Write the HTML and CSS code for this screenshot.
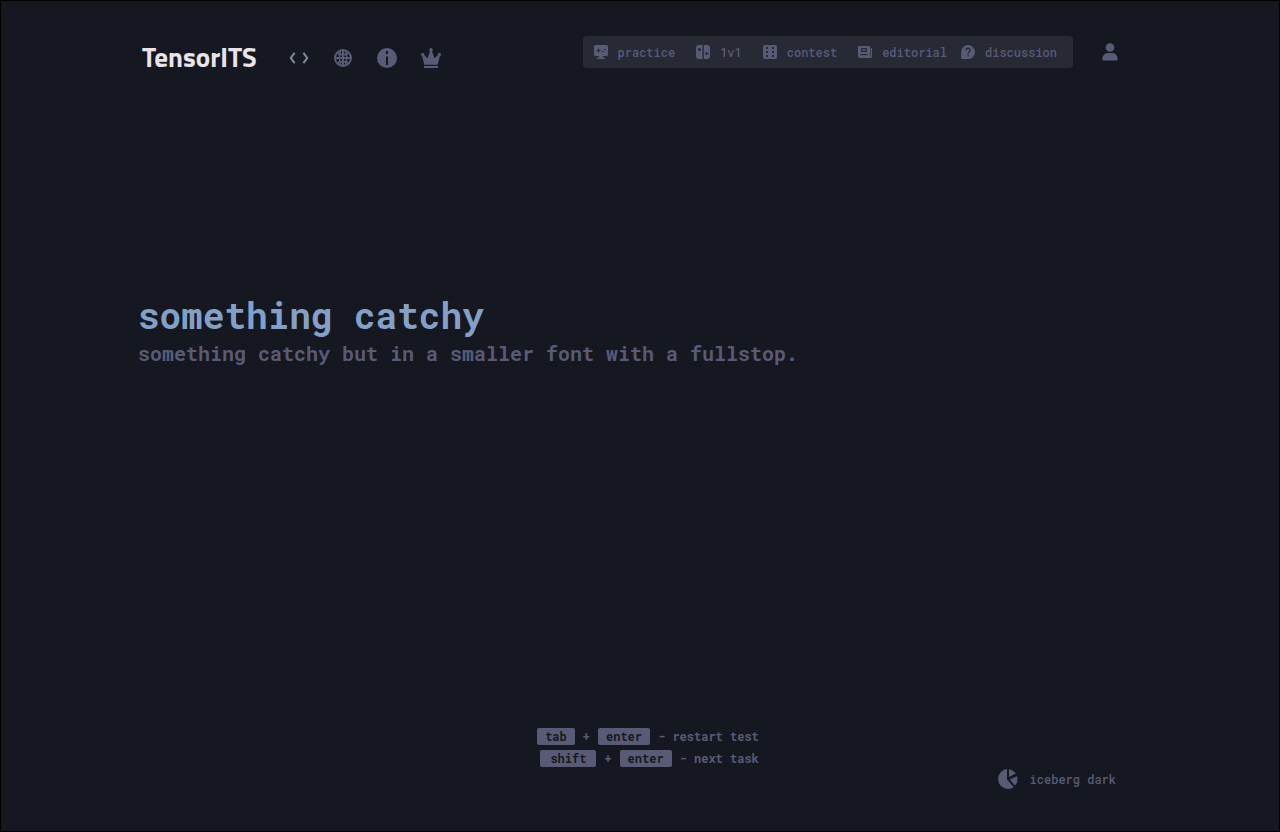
FILE: index.html
```html
<!DOCTYPE html>
<html lang="en">
<head>
<meta charset="utf-8">
<title>TensorITS</title>
<link rel="stylesheet" href="styles.css">
</head>
<body>
<div class="page">
  <header class="header">
    <a class="logo" href="#">TensorITS</a>
    <div class="tools">
      <button class="icon-button" type="button" aria-label="Code">
        <svg width="20" height="20" viewBox="0 0 20 20" fill="none" stroke="#8487a3" stroke-width="2"><path d="M5.6 4.8 1.8 10l3.8 5.2M14.4 4.8l3.8 5.2-3.8 5.2"/></svg>
      </button>
      <button class="icon-button" type="button" aria-label="Language">
        <svg width="20" height="20" viewBox="0 0 20 20" fill="none" stroke="currentColor" stroke-width="2"><circle cx="10" cy="10" r="8"/><path d="M10 2v16M2 10h16M4.500 4c1 3.500 10 3.500 11 0M4.500 16c1-3.500 10-3.500 11 0"/><path stroke-width="1.400" d="M7.800 2.600C5.800 6 5.800 14 7.800 17.400M12.200 2.600c2 3.400 2 11.400 0 14.800"/></svg>
      </button>
      <button class="icon-button" type="button" aria-label="About">
        <svg width="20" height="20" viewBox="0 0 20 20"><circle cx="10" cy="10" r="10" fill="currentColor"/><path fill="#161821" d="M9 3h2v3H9zM9 8.500h2V17H9z"/></svg>
      </button>
      <button class="icon-button" type="button" aria-label="Leaderboard">
        <svg width="20" height="20" viewBox="0 0 20 20" fill="currentColor"><path d="M3.300 16.800 1.200 8.300A1.700 1.700 0 1 1 3.300 7.200l3.200 3L9 3.200a1.700 1.700 0 1 1 2 0l2.500 7 3.200-3a1.700 1.700 0 1 1 2.100 1.100l-2.100 8.500zM3 18h14v2H3z"/></svg>
      </button>
    </div>
    <nav class="nav">
      <div class="nav-group">
        <a class="nav-link" href="#">
          <svg width="14" height="14" viewBox="0 0 14 14"><path fill="currentColor" d="M1.500 0h11A1.500 1.500 0 0 1 14 1.500v8a1.500 1.500 0 0 1-1.500 1.500H9v1.500h2V14H3v-1.500h2V11H1.500A1.500 1.500 0 0 1 0 9.500v-8A1.500 1.500 0 0 1 1.500 0z"/><path stroke="#272935" stroke-width="1.200" d="M4.500 3.500v4M2.500 5.500h4M8 6.500h1.600M10 4.500h1.800"/></svg>
          practice</a>
        <a class="nav-link" href="#">
          <svg width="14" height="14" viewBox="0 0 14 14"><path fill="currentColor" d="M6.400 0v14H3a3 3 0 0 1-3-3V3a3 3 0 0 1 3-3zM7.800 0H11a3 3 0 0 1 3 3v8a3 3 0 0 1-3 3H7.800z"/><circle cx="3.400" cy="4.600" r="1.500" fill="#272935"/><circle cx="10.700" cy="8.500" r="1.500" fill="#272935"/></svg>
          1v1</a>
        <a class="nav-link" href="#">
          <svg width="14" height="14" viewBox="0 0 14 14"><rect width="14" height="14" rx="2" fill="currentColor"/><path fill="#272935" d="M3 2h2v2H3zM9 2h2v2H9zM3 6h2v2H3zM9 6h2v2H9zM3 10h2v2H3zM9 10h2v2H9z"/></svg>
          contest</a>
      </div>
      <div class="nav-group nav-group-close">
        <a class="nav-link" href="#">
          <svg width="14" height="14" viewBox="0 0 14 14"><path fill="currentColor" d="M1 1h10a1 1 0 0 1 1 1v10h-1v1H2a2 2 0 0 1-2-2V2a1 1 0 0 1 1-1zM12.700 3H14v8.500a1.500 1.500 0 0 1-1.500 1.500H11v-1.200h1.700z"/><path fill="#272935" d="M3 3h6v4H3zM2.500 9h7v1.200h-7z"/><path fill="currentColor" d="M4.200 4.200h3.600v1.600H4.200z"/></svg>
          editorial</a>
        <a class="nav-link" href="#">
          <svg width="14" height="14" viewBox="0 0 14 14"><path fill="currentColor" d="M7 0a7 7 0 0 1 0 14H.2V7A6.900 6.900 0 0 1 7 0z"/><path fill="none" stroke="#272935" stroke-width="1.400" d="M5 5.200c.1-2.600 4.200-2.500 4.100 0C9 6.700 7.100 6.700 7.100 8.600M7.100 9.800v1.400"/></svg>
          discussion</a>
      </div>
    </nav>
    <button class="icon-button account" type="button" aria-label="Account">
      <svg width="16" height="18" viewBox="0 0 16 18" fill="currentColor"><circle cx="8" cy="4.500" r="4.300"/><path d="M.5 17.500v-1.800C.5 12.300 3 10 6 10h4c3 0 5.500 2.300 5.500 5.700v1.800z"/></svg>
    </button>
  </header>

  <main class="hero">
    <h1 class="title">something catchy</h1>
    <p class="subtitle">something catchy but in a smaller font with a fullstop.</p>
  </main>

  <footer class="footer">
    <div class="hints">
      <p class="hint"><kbd class="key">tab</kbd><span>+</span><kbd class="key">enter</kbd><span>- restart test</span></p>
      <p class="hint"><kbd class="key key-wide">shift</kbd><span>+</span><kbd class="key">enter</kbd><span>- next task</span></p>
    </div>
    <button class="theme" type="button">
      <svg width="20" height="20" viewBox="0 0 20 20" fill="currentColor"><path d="M9 0v10.500l6.800 7.700A10 10 0 1 1 9 0zM11 .2a10 10 0 0 1 6.800 4.300L11 8zM19 7.200a10 10 0 0 1-2 9.300L11.800 10.500z"/></svg>
      iceberg dark</button>
  </footer>
</div>
</body>
</html>
```
FILE: styles.css
```css
* {
  box-sizing: border-box;
}

body {
  margin: 0;
  background: #161821;
  color: #595b76;
  font-family: "Roboto Mono", "DejaVu Sans Mono", "Liberation Mono", monospace;
  font-size: 12px;
  font-weight: 500;
  line-height: 16px;
}

a {
  color: inherit;
  text-decoration: none;
}

button {
  padding: 0;
  border: 0;
  background: none;
  color: inherit;
  font: inherit;
  cursor: pointer;
}

svg {
  display: block;
  flex: none;
}

.page {
  display: flex;
  flex-direction: column;
  min-height: 100vh;
  border: 1px solid #000;
}

.header {
  display: flex;
  align-items: flex-start;
  padding: 35px 161px 0 141px;
}

.logo {
  padding-top: 3px;
  color: #e9e4ea;
  font-family: "Titillium Web", "Roboto Condensed", Roboto, sans-serif;
  font-size: 27px;
  font-weight: 700;
  line-height: 36px;
}

.tools {
  display: flex;
  gap: 24px;
  padding: 12px 0 0 32px;
}

.nav {
  display: flex;
  align-items: center;
  gap: 21px;
  height: 32px;
  margin-left: auto;
  padding: 0 16px 0 11px;
  border-radius: 4px;
  background: #272935;
}

.nav-group {
  display: flex;
  gap: 21px;
}

.nav-group-close {
  gap: 14px;
}

.nav-link {
  display: flex;
  align-items: center;
  gap: 10px;
}

.account {
  margin-left: 29px;
  padding-top: 7px;
}

.hero {
  flex: 1;
  padding: 216px 137px 0;
}

.title {
  margin: 0;
  color: #84a0c6;
  font-size: 36px;
  font-weight: 700;
  line-height: 48px;
}

.subtitle {
  margin: 0;
  font-size: 20px;
  font-weight: 700;
  line-height: 28px;
}

.footer {
  display: flex;
  flex-direction: column;
  padding: 0 163px 42px 137px;
}

.hints {
  display: flex;
  flex-direction: column;
  align-items: flex-end;
  gap: 5px;
  align-self: center;
  padding-left: 42px;
  font-weight: 700;
  line-height: 17px;
}

.hint {
  display: flex;
  gap: 8px;
  margin: 0;
}

.key {
  padding: 0 8px;
  border-radius: 2px;
  background: #595b76;
  color: #161821;
  font: inherit;
}

.key-wide {
  padding: 0 10px;
}

.theme {
  display: flex;
  align-items: center;
  align-self: flex-end;
  gap: 12px;
  margin-top: 2px;
}
```
